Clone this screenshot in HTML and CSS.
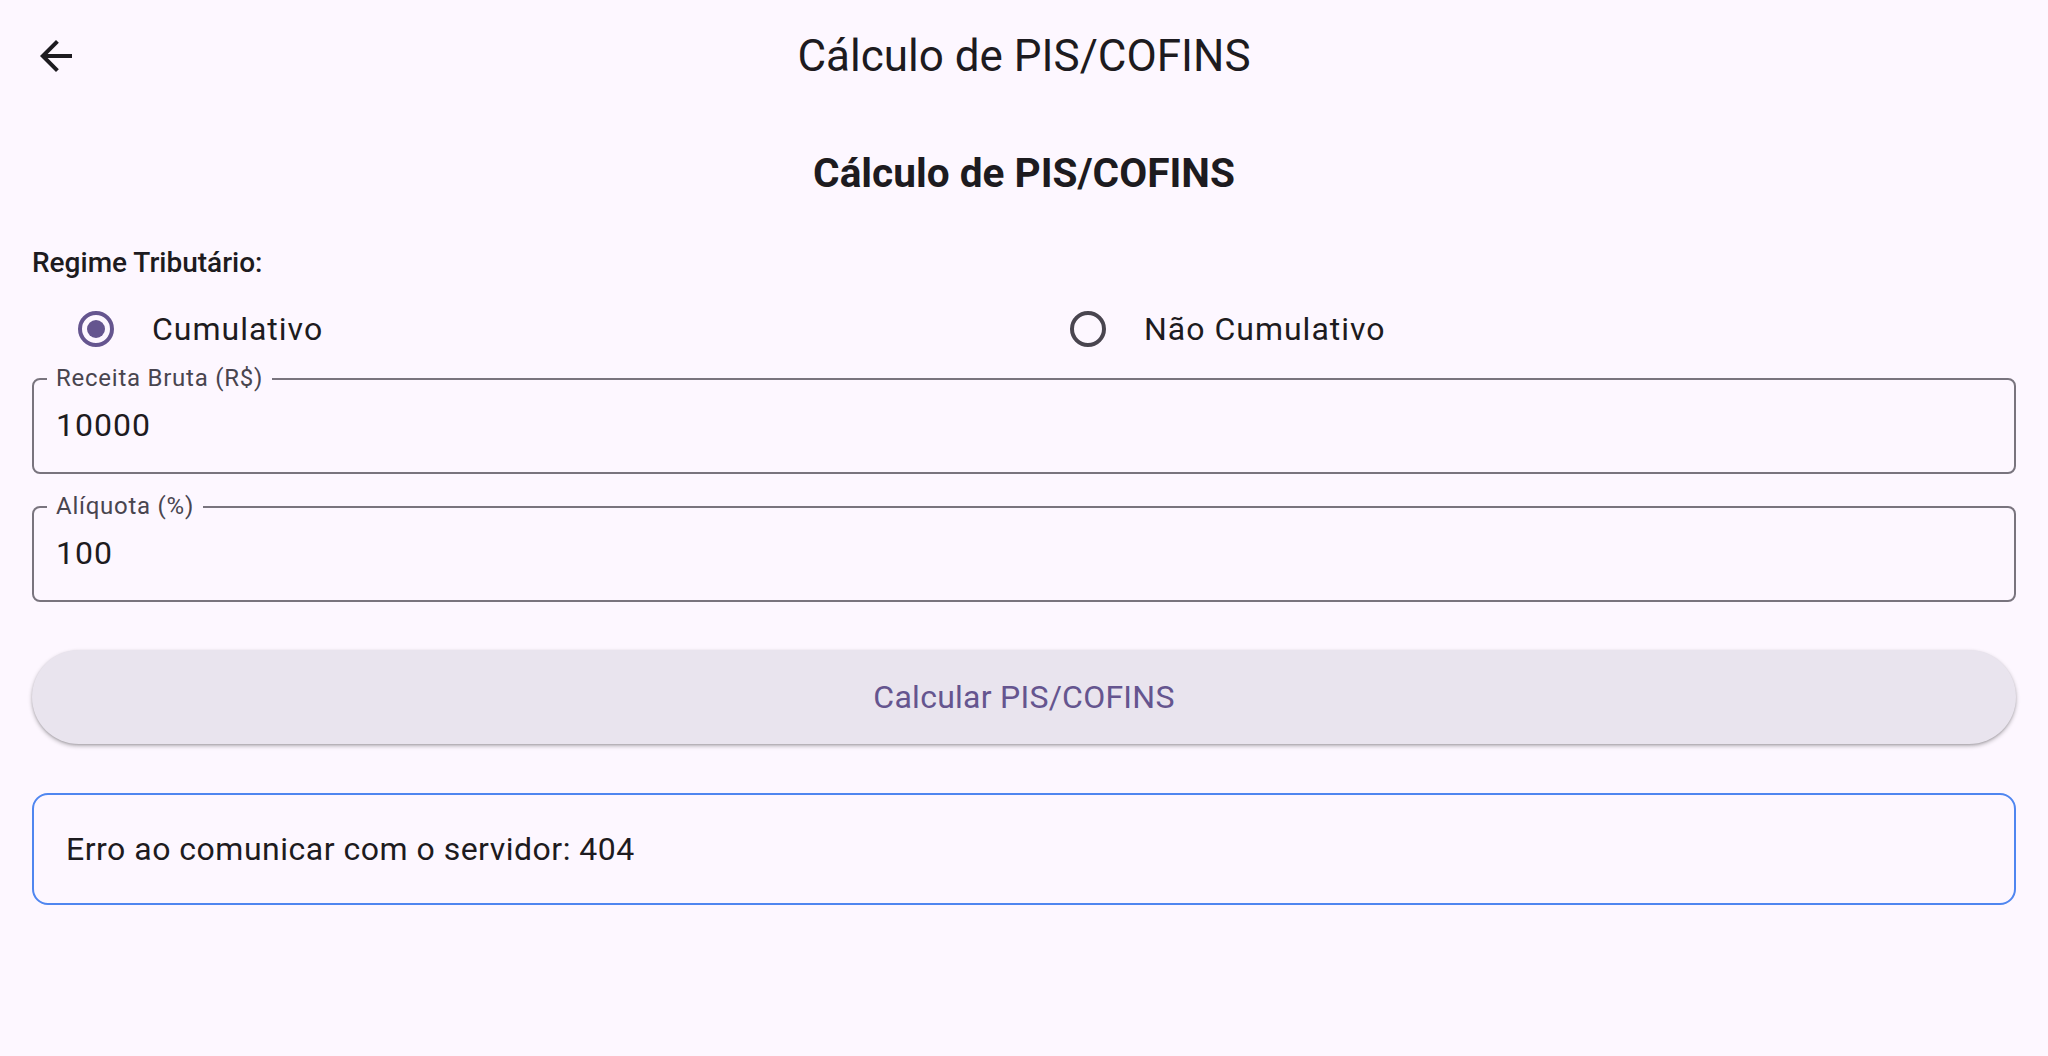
FILE: index.html
```html
<!DOCTYPE html>
<html lang="pt-BR">
<head>
<meta charset="utf-8">
<title>Cálculo de PIS/COFINS</title>
<link rel="stylesheet" href="styles.css">
</head>
<body>
<header class="appbar">
  <button class="back-btn" aria-label="Voltar">
    <svg viewBox="0 0 24 24" width="48" height="48"><path d="M20 11H7.83l5.59-5.59L12 4l-8 8 8 8 1.41-1.41L7.83 13H20v-2z" fill="#1d1b20"/></svg>
  </button>
  <h1 class="appbar-title">Cálculo de PIS/COFINS</h1>
  <span></span>
</header>
<main class="content">
  <h2 class="heading">Cálculo de PIS/COFINS</h2>
  <p class="section-label">Regime Tributário:</p>
  <div class="radio-row">
    <label class="radio-option"><span class="radio checked"></span><span class="radio-text">Cumulativo</span></label>
    <label class="radio-option"><span class="radio"></span><span class="radio-text">Não Cumulativo</span></label>
  </div>
  <div class="field">
    <span class="field-label">Receita Bruta (R$)</span>
    <span class="field-value">10000</span>
  </div>
  <div class="field field-gap">
    <span class="field-label">Alíquota (%)</span>
    <span class="field-value">100</span>
  </div>
  <button class="primary-btn">Calcular PIS/COFINS</button>
  <div class="result">Erro ao comunicar com o servidor: 404</div>
</main>
</body>
</html>
```
FILE: styles.css
```css
html, body {
  margin: 0;
  padding: 0;
}
body {
  background: #fdf7ff;
  font-family: Roboto, "Liberation Sans", sans-serif;
  color: #1d1b20;
  width: 2048px;
  height: 1056px;
  overflow: hidden;
}
.appbar {
  height: 112px;
  display: grid;
  grid-template-columns: 1fr auto 1fr;
  align-items: center;
}
.back-btn {
  margin-left: 32px;
  width: 48px;
  height: 48px;
  padding: 0;
  border: none;
  background: none;
  display: flex;
}
.appbar-title {
  margin: 0;
  font-size: 44px;
  font-weight: 400;
  line-height: 52px;
}
.content {
  padding: 0 32px;
  display: flex;
  flex-direction: column;
}
.heading {
  margin: 38px 0 0;
  text-align: center;
  font-size: 40.6px;
  font-weight: 700;
  line-height: 47px;
}
.section-label {
  margin: 49px 0 0;
  font-size: 28px;
  font-weight: 500;
  line-height: 33px;
}
.radio-row {
  height: 99px;
  display: grid;
  grid-template-columns: 1fr 1fr;
  align-items: center;
}
.radio-option {
  display: flex;
  align-items: center;
  padding-left: 46px;
  gap: 38px;
}
.radio {
  width: 36px;
  height: 36px;
  box-sizing: border-box;
  border: 4px solid #49454f;
  border-radius: 50%;
  display: flex;
  align-items: center;
  justify-content: center;
}
.radio.checked {
  border-color: #65558f;
}
.radio.checked::after {
  content: "";
  width: 18px;
  height: 18px;
  border-radius: 50%;
  background: #65558f;
}
.radio-text {
  font-size: 32px;
  letter-spacing: 1px;
  line-height: 38px;
}
.field {
  position: relative;
  height: 96px;
  box-sizing: border-box;
  border: 2px solid #79747e;
  border-radius: 8px;
  display: flex;
  align-items: center;
  padding-left: 22px;
}
.field-gap {
  margin-top: 32px;
}
.field-label {
  position: absolute;
  top: -16px;
  left: 13px;
  padding: 0 9px;
  background: #fdf7ff;
  font-size: 24px;
  line-height: 28px;
  letter-spacing: 0.75px;
  color: #49454f;
}
.field-value {
  font-size: 32px;
  letter-spacing: 1px;
  line-height: 38px;
  margin-top: -2px;
}
.primary-btn {
  margin-top: 48px;
  height: 94px;
  width: 100%;
  border: none;
  border-radius: 47px;
  background: #e9e4ee;
  color: #65558f;
  font-family: Roboto, "Liberation Sans", sans-serif;
  font-size: 32px;
  font-weight: 400;
  letter-spacing: 0.25px;
  box-shadow: 0 2px 4px rgba(0, 0, 0, 0.28), 0 1px 2px rgba(0, 0, 0, 0.12);
}
.result {
  margin-top: 49px;
  height: 112px;
  box-sizing: border-box;
  border: 2px solid #4f86f0;
  border-radius: 16px;
  padding: 0 32px;
  display: flex;
  align-items: center;
  font-size: 32px;
  letter-spacing: 0.5px;
}
```
